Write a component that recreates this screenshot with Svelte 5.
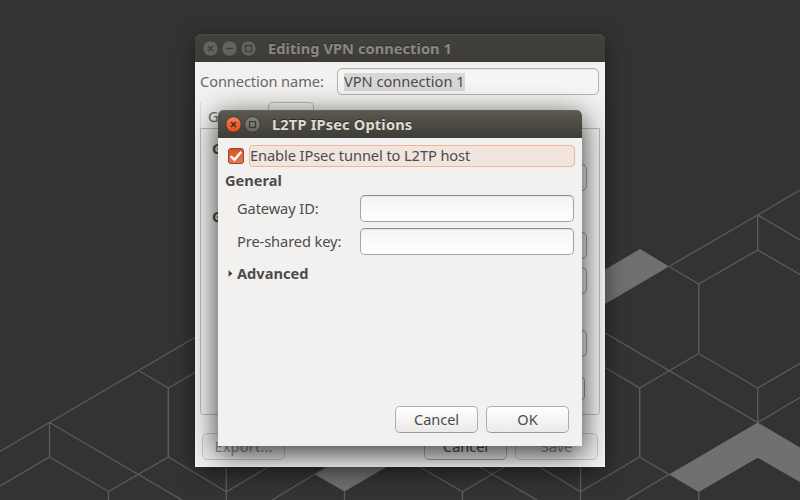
<script>
  const hiddenEntries = [
    { gap: 35, width: 180, height: 27 },
    { gap: 41, width: 180, height: 27 },
    { gap: 8, width: 180, height: 27 },
    { gap: 36, width: 180, height: 27 },
    { gap: 19, width: 178, height: 25 }
  ];
</script>

{#snippet windowButton(kind, active)}
  <svg class="wbtn" width="17" height="17" viewBox="0 0 17 17">
    {#if kind === 'close' && active}
      <circle cx="8.5" cy="8.5" r="7.7" fill="url(#orange)" stroke="#34322d" stroke-width="0.8" />
      <path d="M6 6l5 5M11 6l-5 5" stroke="#4a2416" stroke-width="1.3" fill="none" />
    {:else}
      <circle
        cx="8.5"
        cy="8.5"
        r="7.7"
        fill={active ? 'url(#grey)' : '#64625c'}
        stroke={active ? '#383630' : '#393833'}
        stroke-width="0.8"
      />
      {#if kind === 'close'}
        <path d="M6 6l5 5M11 6l-5 5" stroke="#3a3934" stroke-width="1.2" fill="none" />
      {:else if kind === 'min'}
        <path d="M5 8.5h7" stroke="#3a3934" stroke-width="1.2" />
      {:else}
        <rect x="5.5" y="5.5" width="6" height="6" fill="none" stroke="#3a3934" stroke-width="1.2" />
      {/if}
    {/if}
  </svg>
{/snippet}

<div class="desktop">
  <svg class="wallpaper" width="800" height="500" viewBox="0 0 800 500">
    <defs>
      <linearGradient id="orange" x1="0" y1="0" x2="0" y2="1">
        <stop offset="0" stop-color="#f58a68" />
        <stop offset="0.5" stop-color="#eb6136" />
        <stop offset="1" stop-color="#e2501f" />
      </linearGradient>
      <linearGradient id="grey" x1="0" y1="0" x2="0" y2="1">
        <stop offset="0" stop-color="#87857e" />
        <stop offset="1" stop-color="#65635c" />
      </linearGradient>
    </defs>
    <g fill="#707070">
      <path d="M640 249L669 266.5L600 307V272.5Z" />
      <path d="M669 474.5L757.7 422.5L800 447.5V482L757.7 457.7L698.7 492Z" />
      <path d="M315 474.5L335 462H395L344.5 491.5Z" />
    </g>
    <g fill="none" stroke="#5c5c5c" stroke-width="1.3">
      <path d="M0 451.5L49.5 422.5L138.5 370.5L200 334.5" />
      <path d="M0 486L49.5 457L108.5 491.5V500M49.5 422.5V457M49.5 422.5L182 500" />
      <path d="M108.5 491.5L168.3 457V388L138.5 370.5M168.3 388L200 369.5M168.3 457L226.3 491.7L270 466M226.3 460V500" />
      <path d="M272 500L330 465M344.5 491.5V500M418 466L462.5 491.7L506 466M462.5 491.7V500M478 466L537 500" />
      <path d="M538 466L580.5 491.7L639.7 457V388L600 364.5M580.5 460V500" />
      <path d="M669 266.5L757.7 215L800 190M669 266.5L698.7 284L757.7 250V215L800 240M757.7 250L800 274.5" />
      <path d="M698.7 284V353.5L757.7 388V422.5L600 330M757.7 388L800 363.5M639.7 388L698.7 353.5" />
      <path d="M639.7 457L669 474.5L626 500M757.7 422.5L800 397.5M698.7 492V500" />
    </g>
  </svg>

  <section class="window editor">
    <header class="titlebar">
      <div class="controls">
        {@render windowButton('close', false)}
        {@render windowButton('min', false)}
        {@render windowButton('max', false)}
      </div>
      <span class="title editor-title">Editing VPN connection 1</span>
    </header>
    <div class="editor-body">
      <div class="name-row">
        <span class="name-label">Connection name:</span>
        <div class="entry name-entry"><span class="selected">VPN connection 1</span></div>
      </div>
      <div class="tabs">
        <div class="tab current">G</div>
        <div class="tab other"></div>
      </div>
      <div class="page">
        <div class="headings">
          <b>G</b>
          <b>G</b>
        </div>
        <div class="fields">
          {#each hiddenEntries as e}
            <div class="field" style="margin-top:{e.gap}px;width:{e.width}px;height:{e.height}px"></div>
          {/each}
        </div>
      </div>
      <footer class="editor-actions">
        <button class="btn disabled export">Export...</button>
        <button class="btn cancel-back">Cancel</button>
        <button class="btn disabled">Save</button>
      </footer>
    </div>
  </section>

  <section class="window dialog">
    <header class="titlebar active">
      <div class="controls">
        {@render windowButton('close', true)}
        {@render windowButton('max', true)}
      </div>
      <span class="title dialog-title">L2TP IPsec Options</span>
    </header>
    <div class="dialog-body">
      <div class="check-row">
        <svg class="check" width="16" height="16" viewBox="0 0 16 16">
          <defs>
            <linearGradient id="box" x1="0" y1="0" x2="0" y2="1">
              <stop offset="0" stop-color="#cd5328" />
              <stop offset="1" stop-color="#e47d55" />
            </linearGradient>
          </defs>
          <rect x="0.5" y="0.5" width="15" height="15" rx="2.5" fill="url(#box)" stroke="#9c4527" />
          <path d="M2.8 8.2L6.5 11.8L13.2 3.8" fill="none" stroke="#fff" stroke-width="2.3" />
        </svg>
        <div class="check-label">Enable IPsec tunnel to L2TP host</div>
      </div>
      <b class="heading">General</b>
      <div class="form">
        <span class="label">Gateway ID:</span>
        <div class="entry"></div>
        <span class="label">Pre-shared key:</span>
        <div class="entry"></div>
      </div>
      <div class="expander">
        <svg width="5" height="7" viewBox="0 0 5 7"><path d="M0.6 0.3L4.4 3.5L0.6 6.7Z" fill="#3c3c3c" /></svg>
        <b>Advanced</b>
      </div>
      <footer class="dialog-actions">
        <button class="btn">Cancel</button>
        <button class="btn">OK</button>
      </footer>
    </div>
  </section>
</div>

<style>
  :global(body) {
    margin: 0;
  }
  .desktop {
    position: relative;
    width: 800px;
    height: 500px;
    overflow: hidden;
    background: #333;
    font-family: "Noto Sans", "Open Sans", sans-serif;
    font-size: 14.6px;
    letter-spacing: -0.08px;
    line-height: 20px;
    color: #4c4c4c;
    white-space: nowrap;
  }
  .desktop * {
    box-sizing: border-box;
  }
  .wallpaper {
    display: block;
  }
  .window {
    position: absolute;
    display: flex;
    flex-direction: column;
    border-radius: 7px 7px 0 0;
  }
  .editor {
    left: 195px;
    top: 34px;
    width: 410px;
    height: 433px;
    background: #f2f1f0;
    box-shadow: 0 5px 22px rgba(0, 0, 0, 0.45);
  }
  .dialog {
    left: 218px;
    top: 110px;
    width: 364px;
    height: 336px;
    background: #f2f1f0;
    box-shadow: 0 7px 28px 1px rgba(0, 0, 0, 0.75);
  }
  .titlebar {
    display: flex;
    align-items: center;
    flex: none;
    height: 28px;
    padding-left: 7px;
    border-radius: 6px 6px 0 0;
    background: linear-gradient(#42413c, #3d3c37);
    box-shadow: inset 0 1px #4b4a45;
    color: #8b8881;
    font-weight: 700;
  }
  .titlebar.active {
    background: linear-gradient(#5b5950, #3d3c37);
    box-shadow: inset 0 1px #66645a;
    color: #dfdbd2;
  }
  .controls {
    display: flex;
    gap: 2px;
    padding-top: 1px;
  }
  .wbtn {
    display: block;
  }
  .title {
    text-shadow: 0 -1px #2b2a27;
  }
  .editor-title {
    margin-left: 11px;
    letter-spacing: 0.06px;
  }
  .dialog-title {
    margin-left: 11px;
    letter-spacing: 0.17px;
  }
  b {
    font-weight: 700;
    letter-spacing: 0;
  }
  .editor-body {
    display: flex;
    flex-direction: column;
    flex: 1;
    padding: 6px 5px 7px;
  }
  .name-row {
    display: flex;
    align-items: center;
    justify-content: space-between;
    height: 27px;
    padding-right: 1px;
  }
  .name-label {
    padding-bottom: 2px;
    color: #686868;
  }
  .entry {
    height: 27px;
    border: 1px solid #a5a4a2;
    border-top-color: #8f8e8c;
    border-radius: 5px;
    background: linear-gradient(#f4f4f4, #fff);
    box-shadow: inset 0 1px 1px rgba(0, 0, 0, 0.07);
  }
  .name-entry {
    display: flex;
    align-items: center;
    width: 262px;
    padding-left: 6px;
    border-color: #b3b2b0;
    background: #f5f5f4;
  }
  .selected {
    height: 18px;
    line-height: 16px;
    letter-spacing: 0;
    background: #d8d7d6;
  }
  .tabs {
    display: flex;
    height: 26px;
    margin-top: 7px;
  }
  .tab.current {
    width: 68px;
    padding: 4px 0 0 7px;
    border-left: 1px solid #dcdbda;
    color: #686868;
  }
  .tab.other {
    width: 46px;
    border: 1px solid #bab9b7;
    border-bottom: 0;
    border-radius: 5px 5px 0 0;
  }
  .page {
    display: flex;
    justify-content: space-between;
    height: 287px;
    border: 1px solid #bab9b7;
    border-radius: 0 0 3px 3px;
  }
  .headings {
    display: flex;
    flex-direction: column;
    gap: 48px;
    padding: 9px 0 0 11px;
  }
  .fields {
    width: 192px;
  }
  .field {
    border: 1px solid #9f9e9c;
    border-radius: 5px;
  }
  .editor-actions {
    display: flex;
    gap: 8px;
    margin-top: 18px;
    padding: 0 2px;
  }
  .btn {
    width: 83px;
    height: 27px;
    padding: 0 0 2px;
    border: 1px solid #b0afad;
    border-bottom-color: #9c9b99;
    border-radius: 5px;
    background: linear-gradient(#fff, #ebeae9);
    font: inherit;
    letter-spacing: inherit;
    color: #4c4c4c;
  }
  .btn.disabled {
    border-color: #c9c8c8;
    background: #eeedec;
    color: #8f8f8f;
  }
  .btn.export {
    letter-spacing: 0.15px;
  }
  .cancel-back {
    margin-left: auto;
  }
  .dialog-body {
    display: flex;
    flex-direction: column;
    flex: 1;
    padding: 7px 7px 13px;
  }
  .check-row {
    display: flex;
    align-items: center;
    gap: 5px;
    padding-left: 3px;
  }
  .check {
    display: block;
  }
  .check-label {
    flex: 1;
    height: 22px;
    border: 1px solid #f2b396;
    border-radius: 4px;
    background: #f2e4de;
    line-height: 18px;
  }
  .heading {
    margin-top: 3px;
  }
  .form {
    display: grid;
    grid-template-columns: 123px 214px;
    row-gap: 6px;
    align-items: center;
    margin-top: 5px;
    padding-left: 12px;
  }
  .label {
    padding-bottom: 2px;
  }
  .expander {
    display: flex;
    align-items: center;
    gap: 4px;
    margin-top: 8px;
    padding-left: 3px;
  }
  .dialog-actions {
    display: flex;
    justify-content: flex-end;
    gap: 8px;
    margin-top: auto;
    padding-right: 6px;
  }
</style>
